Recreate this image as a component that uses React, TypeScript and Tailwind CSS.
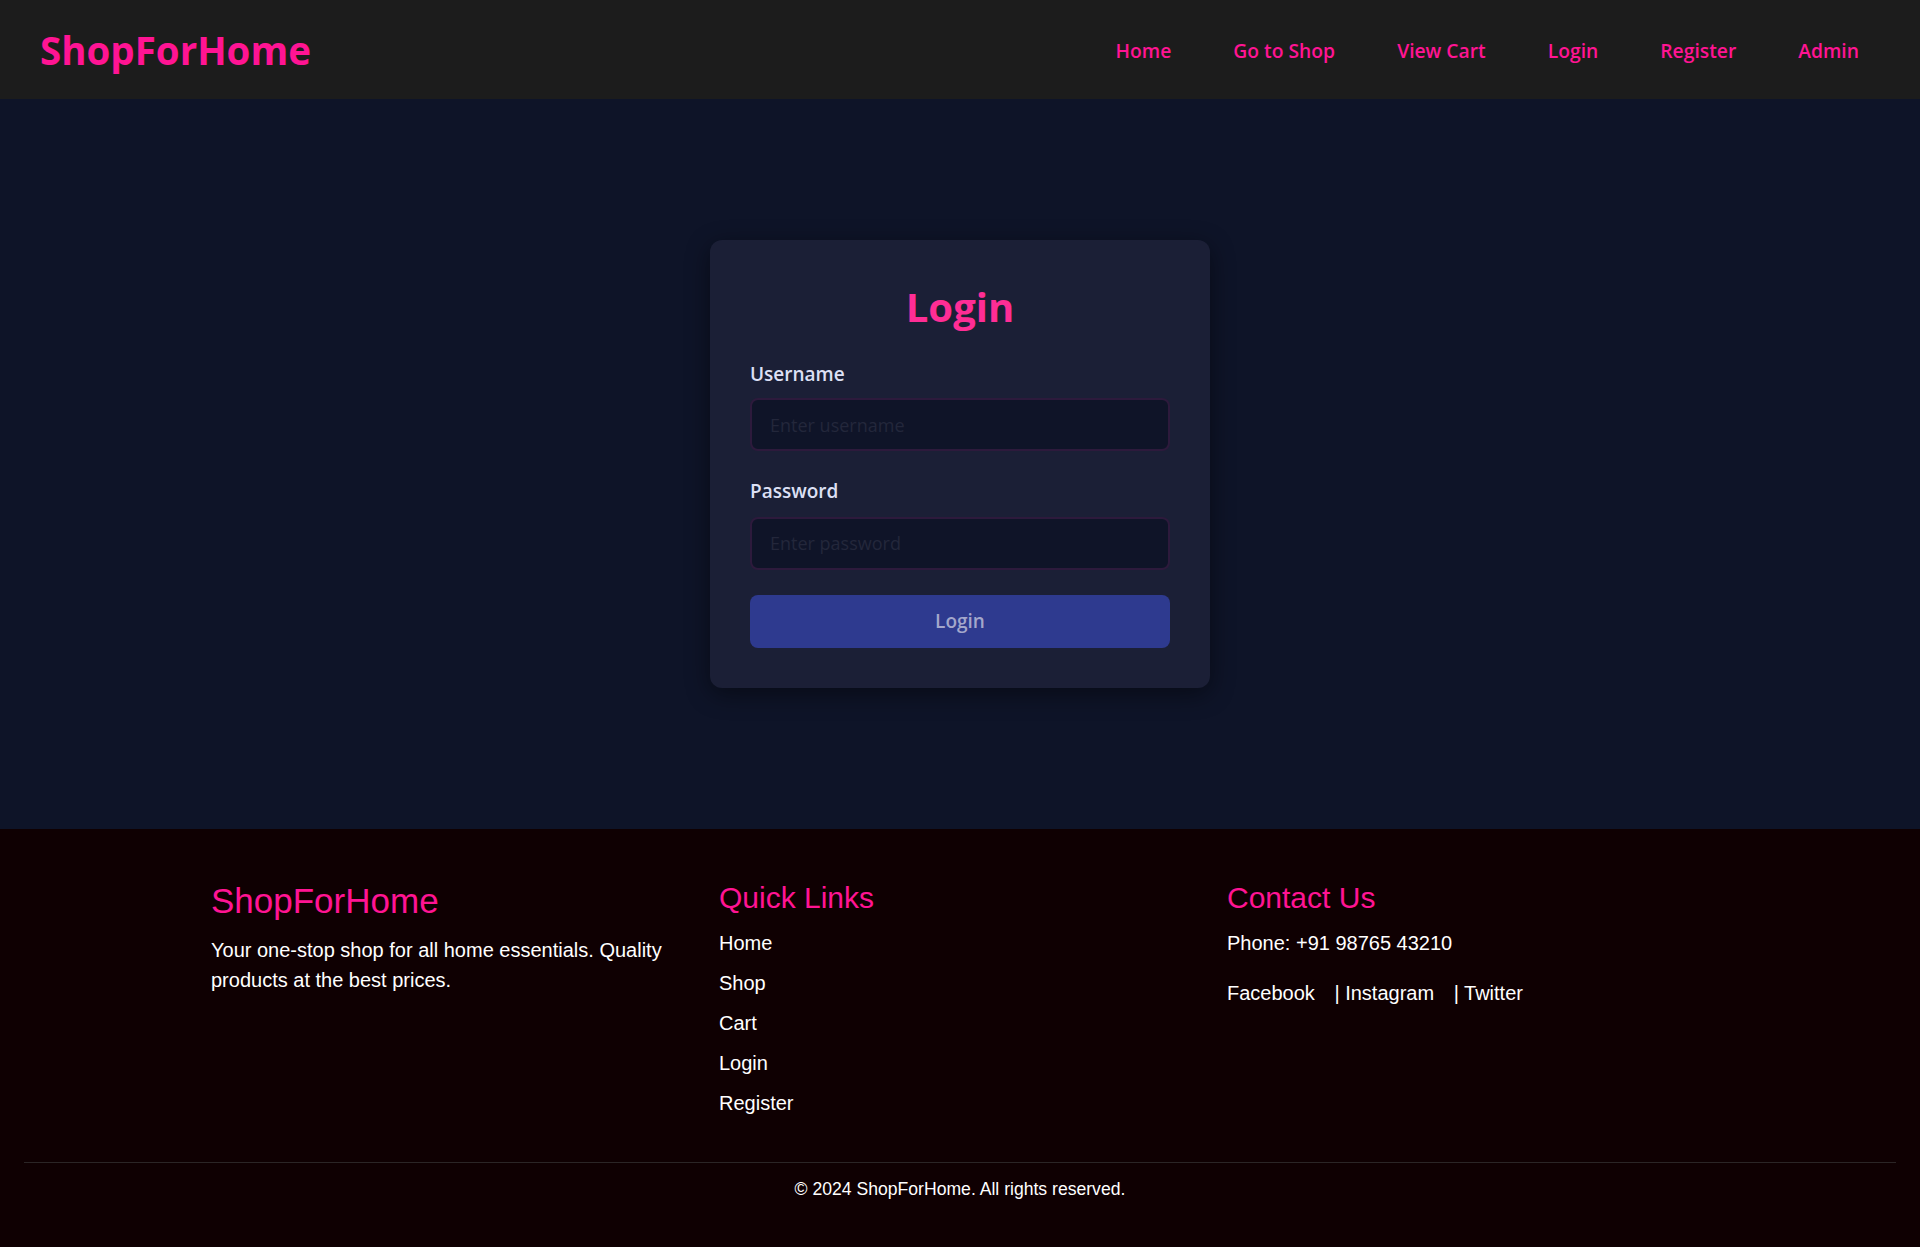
import React, { useState } from 'react';

const NAV = ['Home', 'Go to Shop', 'View Cart', 'Login', 'Register', 'Admin'];
const QUICK = ['Home', 'Shop', 'Cart', 'Login', 'Register'];

const Header: React.FC = () => (
  <header className="h-[99px] shrink-0 bg-[#1c1c1c] flex items-center justify-between pl-10 pr-[61px] font-['Open_Sans',sans-serif]">
    <a href="#" className="text-[38.5px] leading-[1.5] font-bold text-[#ff1493] mt-[2px]">ShopForHome</a>
    <nav className="flex items-center gap-[62px] mt-[3px]">
      {NAV.map(n => (
        <a key={n} href="#" className="text-[19.3px] leading-[30px] font-semibold text-[#ff1493]">{n}</a>
      ))}
    </nav>
  </header>
);

const LoginCard: React.FC = () => {
  const [form, setForm] = useState({ username: '', password: '' });
  const disabled = !form.username || !form.password;

  return (
    <div className="w-[500px] bg-[#1b1f36] rounded-xl p-10 shadow-[0_6px_24px_rgba(0,0,0,0.45)] font-['Open_Sans',sans-serif]">
      <h2 className="text-[40px] leading-[48px] font-bold text-[#ff2d95] text-center pt-[3px] mb-[29px]">Login</h2>
      <form onSubmit={e => e.preventDefault()}>
        <div className="mb-[26px]">
          <label className="block text-[19px] leading-[28.5px] font-semibold text-[#dde0f5] mb-[10px]">Username</label>
          <input
            value={form.username}
            onChange={e => setForm(f => ({ ...f, username: e.target.value }))}
            placeholder="Enter username"
            className="w-full h-[53px] bg-[#0f1428] border-2 border-[#2d1a3c] rounded-lg px-[18px] text-[18px] text-white placeholder:text-[#23273b] focus:outline-none"
          />
        </div>
        <div>
          <label className="block text-[19px] leading-[28.5px] font-semibold text-[#dde0f5] mb-[11px]">Password</label>
          <input
            type="password"
            value={form.password}
            onChange={e => setForm(f => ({ ...f, password: e.target.value }))}
            placeholder="Enter password"
            className="w-full h-[53px] bg-[#0f1428] border-2 border-[#2d1a3c] rounded-lg px-[18px] text-[18px] text-white placeholder:text-[#23273b] focus:outline-none"
          />
        </div>
        <button
          type="submit"
          disabled={disabled}
          className="w-full h-[53px] mt-[25px] bg-[#2e3a8f] rounded-lg text-[19px] font-semibold text-[#a3a7cb]"
        >
          Login
        </button>
      </form>
    </div>
  );
};

const Footer: React.FC = () => (
  <footer className="shrink-0 bg-[#0f0002] text-white pt-[51px] px-6 pb-[45px] font-['Liberation_Sans',Arial,sans-serif]">
    <div className="mx-auto w-[1498px] grid grid-cols-3 gap-[26px]">
      <div>
        <h2 className="text-[35px] leading-[42px] text-[#ff1493] mb-[13px]">ShopForHome</h2>
        <p className="text-[20px] leading-[30px]">Your one-stop shop for all home essentials. Quality products at the best prices.</p>
      </div>
      <div>
        <h3 className="text-[30px] leading-[36px] text-[#ff1493] mb-[12px]">Quick Links</h3>
        <ul>
          {QUICK.map(q => (
            <li key={q} className="text-[20px] leading-[30px] mb-[10px] last:mb-0"><a href="#">{q}</a></li>
          ))}
        </ul>
      </div>
      <div>
        <h3 className="text-[30px] leading-[36px] text-[#ff1493] mb-[12px]">Contact Us</h3>
        <p className="text-[20px] leading-[30px] mb-[20px]">Phone: +91 98765 43210</p>
        <p className="text-[20px] leading-[30px]">
          <a href="#" className="mr-[14px]">Facebook</a>{' | '}
          <a href="#" className="mr-[14px]">Instagram</a>{' | '}
          <a href="#">Twitter</a>
        </p>
      </div>
    </div>
    <div className="mt-[44px] h-px bg-[#2b2526]" />
    <p className="mt-[13px] text-center text-[17.6px] leading-[26.4px]">© 2024 ShopForHome. All rights reserved.</p>
  </footer>
);

export default function App() {
  return (
    <div className="min-h-screen flex flex-col bg-[#0e1428]">
      <Header />
      <main className="flex-1 flex items-center justify-center">
        <LoginCard />
      </main>
      <Footer />
    </div>
  );
}
